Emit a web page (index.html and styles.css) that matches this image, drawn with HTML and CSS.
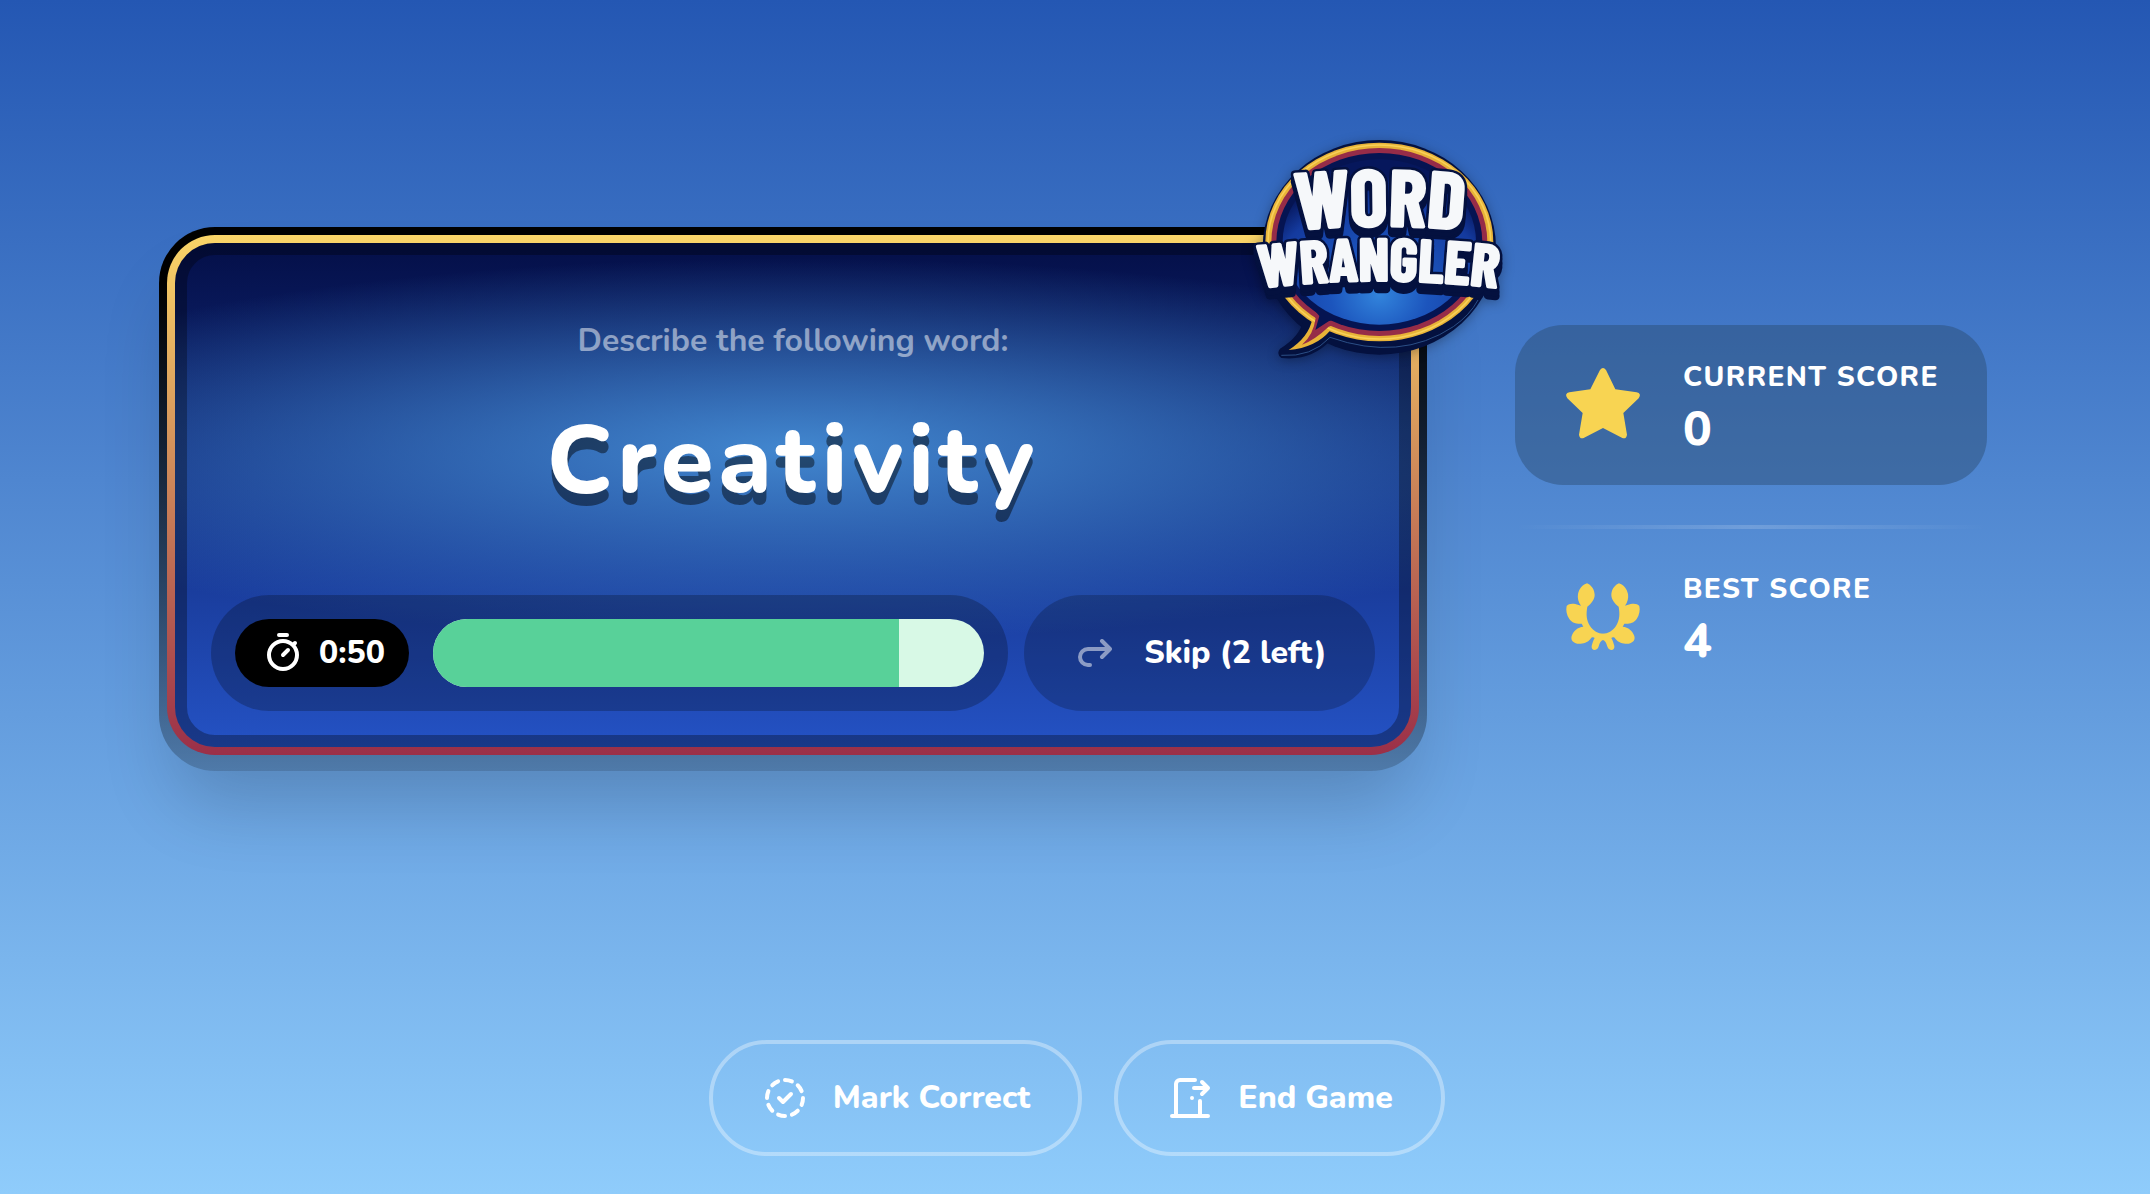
FILE: index.html
```
<!DOCTYPE html>
<html lang="en">
<head>
  <meta charset="utf-8">
  <meta name="viewport" content="width=device-width, initial-scale=1">
  <title>Word Wrangler</title>
  <link rel="stylesheet" href="styles.css">
</head>
<body>
  <main class="game">
    <section class="card">
      <svg class="logo" viewBox="0 0 840 780" role="img" aria-label="Word Wrangler">
        <defs>
          <radialGradient id="bubble" cx="50%" cy="82%" r="72%">
            <stop offset="0" stop-color="#3284dc"/>
            <stop offset="0.35" stop-color="#1c55bd"/>
            <stop offset="0.8" stop-color="#143a9e"/>
            <stop offset="1" stop-color="#06175c"/>
          </radialGradient>
          <path id="arc-word" d="M78 342 Q420 296 762 342"/>
          <path id="arc-wrangler" d="M-36 518 Q416 448 868 518"/>
          <text id="line-word" class="logo-word"><textPath href="#arc-word" startOffset="50%">WORD</textPath></text>
          <text id="line-wrangler" class="logo-wrangler"><textPath href="#arc-wrangler" startOffset="50%">WRANGLER</textPath></text>
        </defs>
        <g fill="#04113f">
          <ellipse cx="418" cy="382" rx="350" ry="322"/>
          <path d="M120 520 L190 600 Q180 650 120 686 Q108 702 124 714 Q215 724 275 658 L420 600 Z"/>
        </g>
        <path d="M124 706 Q215 712 270 652 Q480 726 640 620 Q690 585 714 540" fill="none" stroke="#2b4f86" stroke-width="3"/>
        <g fill="#e8b338">
          <ellipse cx="418" cy="366" rx="342" ry="298"/>
          <path d="M138 510 L217 597 Q206 652 146 690 Q228 682 270 632 L420 560 Z"/>
        </g>
        <ellipse cx="418" cy="366" rx="334" ry="291" fill="none" stroke="#f8d058" stroke-width="5"/>
        <g fill="#962c48">
          <ellipse cx="418" cy="366" rx="324" ry="282"/>
          <path d="M160 520 L227 594 Q220 646 186 674 Q224 660 266 620 L420 560 Z"/>
        </g>
        <g fill="#051452">
          <ellipse cx="418" cy="366" rx="309" ry="267"/>
          <path d="M180 520 L238 588 L226 630 L266 604 L400 560 Z"/>
        </g>
        <ellipse cx="418" cy="366" rx="290" ry="248" fill="url(#bubble)"/>
        <g class="logo-depth">
          <use href="#line-word" y="22"/><use href="#line-word" y="12"/><use href="#line-word"/>
          <use href="#line-wrangler" y="26"/><use href="#line-wrangler" y="14"/><use href="#line-wrangler"/>
        </g>
        <g class="logo-face">
          <use href="#line-word"/>
          <use href="#line-wrangler"/>
        </g>
      </svg>

      <div class="stage">
        <p class="prompt">Describe the following word:</p>
        <h1 class="word">Creativity</h1>
      </div>

      <div class="controls">
        <div class="timer">
          <div class="clock">
            <svg class="icon" viewBox="0 0 24 24" aria-hidden="true"><path d="M5 13a7 7 0 1 0 14 0a7 7 0 0 0-14 0M14.500 10.500l-2.500 2.500M17 8l1-1M14 3h-4"/></svg>
            <span>0:50</span>
          </div>
          <div class="track" role="progressbar" aria-label="Time left" aria-valuenow="50" aria-valuemin="0" aria-valuemax="60">
            <div class="fill" style="width: 84.5%"></div>
          </div>
        </div>
        <button class="skip" type="button">
          <svg class="icon icon-dim" viewBox="0 0 24 24" aria-hidden="true"><path d="M15 14l4-4l-4-4M19 10h-11a4 4 0 1 0 0 8h1"/></svg>
          <span>Skip (2 left)</span>
        </button>
      </div>
    </section>

    <aside class="scores">
      <div class="score score-current">
        <svg class="badge" viewBox="189 165 240 240" aria-hidden="true"><path d="M300 180Q309 168 318 180L346 238L410 247Q426 251 416 265L370 309L381 374Q379 388 367 384L309 354L251 384Q239 388 237 374L248 309L202 265Q192 251 208 247L271 238Z"/></svg>
        <div class="score-text">
          <h2 class="score-label">Current score</h2>
          <p class="score-value">0</p>
        </div>
      </div>
      <hr class="divider">
      <div class="score">
        <svg class="badge" viewBox="189 201 240 240" aria-hidden="true">
          <path id="branch" d="M264 221C276 227 284 240 284 255C284 268 274 281 262 290C258 312 259 330 270 348C280 363 294 371 310 371L310 390C302 391 299 400 295 412C290 424 273 423 275 408C277 400 280 390 284 384C281 381 275 381 272 386C262 399 246 402 232 401C218 398 212 390 215 378C220 362 233 352 250 350L245 341C231 342 217 340 208 327C200 316 197 300 200 288C205 281 216 280 226 282L243 287C235 277 232 264 234 252C237 236 248 224 258 221Q261 219 264 221Z"/>
          <use href="#branch" transform="translate(618 0) scale(-1 1)"/>
        </svg>
        <div class="score-text">
          <h2 class="score-label">Best score</h2>
          <p class="score-value">4</p>
        </div>
      </div>
    </aside>
  </main>

  <footer class="actions">
    <button class="action action-wide" type="button">
      <svg class="icon" viewBox="0 0 24 24" aria-hidden="true"><path d="M8.560 3.690a9 9 0 0 0-2.920 1.950M3.690 8.560a9 9 0 0 0-.69 3.440M3.690 15.440a9 9 0 0 0 1.950 2.920M8.560 20.310a9 9 0 0 0 3.440.69M15.440 20.310a9 9 0 0 0 2.920-1.950M20.310 15.440a9 9 0 0 0 .69-3.440M20.310 8.560a9 9 0 0 0-1.950-2.920M15.440 3.690a9 9 0 0 0-3.440-.69M9 12l2 2l4-4"/></svg>
      <span>Mark Correct</span>
    </button>
    <button class="action" type="button">
      <svg class="icon" viewBox="0 0 24 24" aria-hidden="true"><path d="M13 12v.01M3 21h18M5 21v-16a2 2 0 0 1 2-2h7.500M17 13.500v7.500M14 7h7M18 4l3 3l-3 3"/></svg>
      <span>End Game</span>
    </button>
  </footer>
</body>
</html>
```
FILE: styles.css
```
* {
  box-sizing: border-box;
}

body {
  display: flex;
  flex-direction: column;
  min-height: 100vh;
  margin: 0;
  padding: 0 0 38px 4px;
  background: linear-gradient(#2457b3, #8fccfb);
  color: #fff;
  font-family: Nunito, "Open Sans", "Noto Sans", sans-serif;
  font-size: 32px;
  line-height: 44px;
}

h1,
h2,
p {
  margin: 0;
}

button {
  font: inherit;
  color: inherit;
  cursor: pointer;
}

.game {
  flex: 1;
  display: grid;
  grid-template-columns: minmax(0, 1252px) 472px;
  gap: 96px;
  align-items: center;
  justify-content: center;
  padding-bottom: 50px;
  isolation: isolate;
}

/* Card */

.card {
  position: relative;
  display: flex;
  flex-direction: column;
  min-height: 520px;
  padding: 36px;
  border: 8px solid transparent;
  border-radius: 48px;
  background:
    radial-gradient(72% 38% at 50% 41%, #4287cf, rgba(66, 135, 207, 0)) padding-box,
    linear-gradient(#040f48, #2452c4) padding-box,
    linear-gradient(#fad568, #9b2f48) border-box;
}

.card::before {
  content: "";
  position: absolute;
  z-index: -1;
  inset: -16px -16px -24px;
  border-radius: 56px;
  background: linear-gradient(#000 10%, rgba(0, 0, 0, 0.25));
  box-shadow: 0 48px 72px -16px rgba(0, 0, 0, 0.17);
}

.card::after {
  content: "";
  position: absolute;
  inset: 0;
  border: 12px solid rgba(0, 0, 0, 0.3);
  border-radius: 40px;
  pointer-events: none;
}

.logo {
  position: absolute;
  z-index: 1;
  top: -123px;
  right: -109px;
  width: 280px;
  height: 260px;
  filter: drop-shadow(0 2px 6px rgba(0, 0, 0, 0.3));
}

.logo-word,
.logo-wrangler {
  font-family: "Barlow Condensed", "Roboto Condensed", Roboto, sans-serif;
  font-weight: 700;
  text-anchor: middle;
}

.logo-word {
  font-size: 240px;
}

.logo-wrangler {
  font-size: 180px;
}

.logo-depth {
  fill: #04113f;
  stroke: #04113f;
  stroke-width: 22px;
  stroke-linejoin: round;
}

.logo-face {
  fill: #f6f8fa;
  stroke: #f6f8fa;
  stroke-width: 7px;
  stroke-linejoin: miter;
}

.stage {
  flex: 1;
  display: flex;
  flex-direction: column;
  align-items: center;
  gap: 32px;
  padding-top: 40px;
  text-align: center;
}

.prompt {
  color: rgba(255, 255, 255, 0.5);
  font-weight: 700;
}

.word {
  font-size: 96px;
  font-weight: 800;
  line-height: 132px;
  letter-spacing: 0.05em;
  text-shadow: 0 12px 0 rgba(0, 0, 0, 0.45);
}

.controls {
  display: flex;
  gap: 16px;
}

.timer {
  flex: 1;
  display: flex;
  gap: 24px;
  padding: 24px;
  border-radius: 58px;
  background: rgba(0, 0, 0, 0.23);
}

.clock {
  display: flex;
  align-items: center;
  justify-content: center;
  gap: 12px;
  min-width: 174px;
  height: 68px;
  padding: 0 22px;
  border-radius: 34px;
  background: #000;
  font-weight: 800;
}

.track {
  flex: 1;
  overflow: hidden;
  border-radius: 34px;
  background: #d8f9e6;
}

.fill {
  height: 100%;
  background: #58d199;
}

.skip,
.action {
  display: flex;
  align-items: center;
  justify-content: center;
  gap: 24px;
  height: 116px;
  border-radius: 58px;
  font-weight: 800;
}

.skip {
  width: 351px;
  border: 0;
  background: rgba(0, 0, 0, 0.2);
}

.icon {
  flex: none;
  width: 48px;
  height: 48px;
  fill: none;
  stroke: currentColor;
  stroke-width: 2;
  stroke-linecap: round;
  stroke-linejoin: round;
}

.icon-dim {
  opacity: 0.5;
}

/* Scores */

.scores {
  display: flex;
  flex-direction: column;
  gap: 40px;
}

.score {
  display: flex;
  align-items: center;
  gap: 40px;
  padding: 0 48px;
}

.score-current {
  padding: 32px 48px;
  border-radius: 48px;
  background: rgba(40, 72, 105, 0.42);
}

.badge {
  flex: none;
  width: 80px;
  height: 80px;
  fill: #f8d452;
}

.score-text {
  display: flex;
  flex-direction: column;
  gap: 8px;
}

.score-label {
  font-size: 28px;
  font-weight: 800;
  line-height: 40px;
  letter-spacing: 0.05em;
  text-transform: uppercase;
  white-space: nowrap;
}

.score-value {
  font-size: 48px;
  font-weight: 800;
  line-height: 48px;
}

.divider {
  width: 100%;
  height: 4px;
  margin: 0;
  border: 0;
  background: linear-gradient(90deg, rgba(255, 255, 255, 0), rgba(255, 255, 255, 0.17), rgba(255, 255, 255, 0));
}

/* Actions */

.actions {
  display: flex;
  justify-content: center;
  gap: 32px;
}

.action {
  min-width: 331px;
  padding: 0 44px;
  border: 4px solid rgba(255, 255, 255, 0.35);
  background: transparent;
}

.action-wide {
  min-width: 373px;
}
```
